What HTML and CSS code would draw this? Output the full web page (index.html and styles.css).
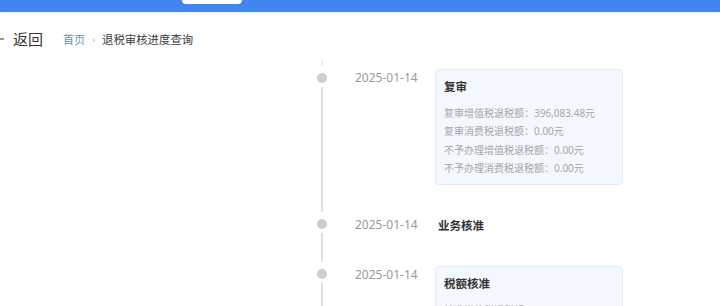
FILE: index.html
```html
<!DOCTYPE html>
<html lang="zh-CN">
<head>
    <meta charset="utf-8" />
    <link rel="stylesheet" href="styles.css">
    <title>退税审核进度查询</title>
</head>

<body>
    <div class="topbar">
        <span class="search-tab"></span>
    </div>

    <div class="nav">
        <a class="back">
            <svg class="back-icon" width="14" height="12" viewBox="0 0 14 12">
                <path d="M13 6H1.5M6 1.5L1.5 6L6 10.5" fill="none" stroke="#333" stroke-width="1.2" />
            </svg>
            返回
        </a>
        <div class="crumbs">
            <span class="crumb-home">首页</span>
            <span class="crumb-sep">›</span>
            <span class="crumb-cur">退税审核进度查询</span>
        </div>
    </div>

    <!-- 审核进度时间线 -->
    <div class="timeline">
        <div class="tl-stub"></div>

        <div class="tl-item">
            <div class="tl-axis"><span class="tl-dot"></span><span class="tl-line"></span></div>
            <div class="tl-date">2025-01-14</div>
            <div class="tl-body">
                <div class="card">
                    <div class="card-title">复审</div>
                    <div class="card-rows">
                        <div class="card-row">复审增值税退税额：396,083.48元</div>
                        <div class="card-row">复审消费税退税额：0.00元</div>
                        <div class="card-row">不予办理增值税退税额：0.00元</div>
                        <div class="card-row">不予办理消费税退税额：0.00元</div>
                    </div>
                </div>
            </div>
        </div>

        <div class="tl-item">
            <div class="tl-axis"><span class="tl-dot"></span><span class="tl-line"></span></div>
            <div class="tl-date">2025-01-14</div>
            <div class="tl-body">
                <div class="plain-title">业务核准</div>
            </div>
        </div>

        <div class="tl-item">
            <div class="tl-axis"><span class="tl-dot"></span><span class="tl-line"></span></div>
            <div class="tl-date">2025-01-14</div>
            <div class="tl-body">
                <div class="card">
                    <div class="card-title">税额核准</div>
                    <div class="card-rows">
                        <div class="card-row">核准增值税退税额：396,083.48元</div>
                        <div class="card-row">核准消费税退税额：0.00元</div>
                    </div>
                </div>
            </div>
        </div>
    </div>
</body>
</html>
```

FILE: styles.css
```css
* {
    box-sizing: border-box;
}
html, body {
    overflow: hidden;
}
body {
    margin: 0;
    background: #fff;
    font-family: "Noto Sans", "Noto Sans CJK SC", sans-serif;
    color: #333;
}

/* 顶部蓝条 */
.topbar {
    height: 12px;
    background: #4185ee;
    padding-left: 182px;
    box-shadow: 0 1px 2px rgba(65, 133, 238, 0.15);
}
.search-tab {
    display: block;
    width: 60px;
    height: 3.5px;
    background: #fff;
    border-radius: 0 0 5px 5px;
}

/* 返回 + 面包屑 */
.nav {
    display: flex;
    align-items: center;
    padding-top: 18px;
    height: 36px;
}
.back {
    display: flex;
    align-items: center;
    font-family: "Noto Sans CJK SC", sans-serif;
    font-size: 15px;
    line-height: 18px;
    color: #333;
}
.back-icon {
    margin-left: -9px;
    margin-right: 8px;
}
.crumbs {
    display: flex;
    align-items: center;
    margin-left: 20px;
    font-family: "Noto Sans CJK SC", sans-serif;
    font-size: 11px;
    line-height: 18px;
}
.crumb-home {
    color: #6f8fae;
}
.crumb-sep {
    color: #b5b5b5;
    margin: 0 7px 0 7px;
    font-size: 10px;
}
.crumb-cur {
    color: #3a3a3a;
    font-size: 11.4px;
}

/* 时间线 */
.timeline {
    padding-left: 317px;
    padding-top: 11px;
}
.tl-stub {
    width: 2px;
    height: 7px;
    margin: 0 0 3px 4px;
    background: #ececec;
}
.tl-item {
    display: flex;
    align-items: stretch;
}
.tl-axis {
    width: 10px;
    display: flex;
    flex-direction: column;
    align-items: center;
}
.tl-dot {
    width: 10px;
    height: 10px;
    margin-top: 3.7px;
    border-radius: 50%;
    background: #cdcdcd;
}
.tl-line {
    flex: 1;
    width: 2px;
    margin: 4px 0 4px;
    background: #e0e0e0;
}
.tl-date {
    width: 80px;
    margin-left: 28px;
    font-size: 12px;
    line-height: 18px;
    color: #9a9a9a;
}
.tl-body {
    width: 188px;
    padding-bottom: 31px;
}
.tl-item:nth-child(3) .tl-body {
    padding-bottom: 32px;
}

.card {
    background: #f3f8fe;
    border: 1px solid #e1eaf5;
    border-radius: 4px;
    padding: 8px 8px 6px;
}
.card-title,
.plain-title {
    font-family: "Noto Sans CJK SC", sans-serif;
    font-size: 11.5px;
    font-weight: bold;
    line-height: 16px;
    color: #333;
}
.plain-title {
    line-height: 18px;
    margin-left: 3px;
}
.card-rows {
    margin-top: 10px;
}
.card-row {
    font-size: 10px;
    line-height: 18.4px;
    color: #a6a6a6;
    white-space: nowrap;
}
```
